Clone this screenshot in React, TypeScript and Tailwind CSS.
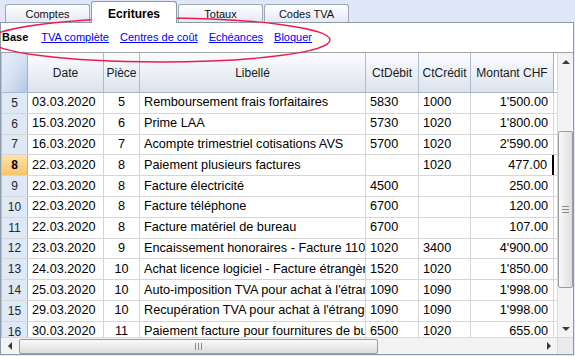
type Row = {
  n: number;
  date: string;
  doc: string;
  desc: string;
  deb: string;
  cre: string;
  amt: string;
};

const rows: Row[] = [
  { n: 5, date: "03.03.2020", doc: "5", desc: "Remboursement frais forfaitaires", deb: "5830", cre: "1000", amt: "1'500.00" },
  { n: 6, date: "15.03.2020", doc: "6", desc: "Prime LAA", deb: "5730", cre: "1020", amt: "1'800.00" },
  { n: 7, date: "16.03.2020", doc: "7", desc: "Acompte trimestriel cotisations AVS", deb: "5700", cre: "1020", amt: "2'590.00" },
  { n: 8, date: "22.03.2020", doc: "8", desc: "Paiement plusieurs factures", deb: "", cre: "1020", amt: "477.00" },
  { n: 9, date: "22.03.2020", doc: "8", desc: "Facture électricité", deb: "4500", cre: "", amt: "250.00" },
  { n: 10, date: "22.03.2020", doc: "8", desc: "Facture téléphone", deb: "6700", cre: "", amt: "120.00" },
  { n: 11, date: "22.03.2020", doc: "8", desc: "Facture matériel de bureau", deb: "6700", cre: "", amt: "107.00" },
  { n: 12, date: "23.03.2020", doc: "9", desc: "Encaissement honoraires - Facture 1100", deb: "1020", cre: "3400", amt: "4'900.00" },
  { n: 13, date: "24.03.2020", doc: "10", desc: "Achat licence logiciel - Facture étrangère", deb: "1520", cre: "1020", amt: "1'850.00" },
  { n: 14, date: "25.03.2020", doc: "10", desc: "Auto-imposition TVA pour achat à l'étranger", deb: "1090", cre: "1090", amt: "1'998.00" },
  { n: 15, date: "29.03.2020", doc: "10", desc: "Recupération TVA pour achat à l'étranger", deb: "1090", cre: "1090", amt: "1'998.00" },
  { n: 16, date: "30.03.2020", doc: "11", desc: "Paiement facture pour fournitures de bureau", deb: "6500", cre: "1020", amt: "655.00" },
];

// largeurs des colonnes : n°, Date, Pièce, Libellé, CtDébit, CtCrédit, Montant
const grid = "grid grid-cols-[26px_76px_36px_226px_53px_52px_83px]";

function Tab({ label, active }: { label: string; active?: boolean }) {
  if (active) {
    return (
      <div className="relative z-10 -mb-px flex h-[22px] w-[86px] justify-center rounded-t-[3px] border border-b-0 border-[#8e99a8] bg-white pt-[3px] text-[12px] font-bold">
        {label}
      </div>
    );
  }
  return (
    <div className="flex h-[18px] w-[85px] items-center justify-center rounded-t-[3px] border border-b-0 border-[#9ca7b5] bg-gradient-to-b from-white to-[#e3e9f3] pt-[2px] text-[11px] text-[#111]">
      {label}
    </div>
  );
}

function HeaderRow() {
  const cell =
    "flex items-center justify-center border-r border-[#aabdd0] bg-gradient-to-b from-[#fbfcfe] to-[#dde4ee] text-[12px] text-[#1b1b1b]";
  return (
    <div className={`${grid} h-[40px] shrink-0 border-b border-[#a9b9cb]`}>
      <div className="border-r border-[#9fb3cc] bg-gradient-to-br from-[#e7eefa] via-[#d6e2f4] to-[#b4c7e2]" />
      <div className={cell}>Date</div>
      <div className={cell}>Pièce</div>
      <div className={cell}>Libellé</div>
      <div className={cell}>CtDébit</div>
      <div className={cell}>CtCrédit</div>
      <div className={`${cell} border-r-[#f0a43a]`}>Montant CHF</div>
    </div>
  );
}

function DataRow({ r }: { r: Row }) {
  const current = r.n === 8;
  const cell = "flex items-center overflow-hidden whitespace-nowrap border-r border-[#d6d6d6]";
  return (
    <div className={`${grid} h-[20.8px] shrink-0 border-b border-[#d6d6d6] text-[12.7px]`}>
      <div
        className={
          current
            ? "flex items-center justify-center border-r border-[#9fb3cc] bg-gradient-to-b from-[#fde3a6] to-[#f8c46a] font-['Liberation_Sans_Narrow','Liberation_Sans',sans-serif] text-[12px] font-bold"
            : "flex items-center justify-center border-r border-[#9fb3cc] bg-[#dfe8f5] font-['Liberation_Sans_Narrow','Liberation_Sans',sans-serif] text-[12px] text-[#1c2633]"
        }
      >
        {r.n}
      </div>
      <div className={`${cell} pl-[4px]`}>{r.date}</div>
      <div className={`${cell} justify-center`}>{r.doc}</div>
      <div className={`${cell} pl-[4px]`}>{r.desc}</div>
      <div className={`${cell} pl-[4px]`}>{r.deb}</div>
      <div className={`${cell} pl-[4px]`}>{r.cre}</div>
      <div className={`${cell} justify-end pr-[5px] ${current ? "border-r-2 border-r-black" : ""}`}>{r.amt}</div>
    </div>
  );
}

function Arrow({ dir }: { dir: "up" | "down" | "left" | "right" }) {
  const pts = {
    up: "0,4 4,0 8,4",
    down: "0,0 8,0 4,4",
    left: "4,0 4,8 0,4",
    right: "0,0 4,4 0,8",
  }[dir];
  const vertical = dir === "up" || dir === "down";
  return (
    <svg width={vertical ? 8 : 4} height={vertical ? 4 : 8} viewBox={vertical ? "0 0 8 4" : "0 0 4 8"}>
      <polygon points={pts} fill="#3a3a3a" />
    </svg>
  );
}

function VScroll() {
  return (
    <div className="flex w-[16px] flex-col border-l border-[#d9d9d9] bg-[#f3f3f3]">
      <div className="flex h-[18px] items-center justify-center">
        <Arrow dir="up" />
      </div>
      <div className="h-[60px]" />
      <div className="flex h-[157px] flex-col items-center justify-center gap-[2px] rounded-[2px] border border-[#9c9c9c] bg-gradient-to-r from-[#fafafa] to-[#dedede]">
        <div className="h-px w-[7px] bg-[#8a8a8a]" />
        <div className="h-px w-[7px] bg-[#8a8a8a]" />
        <div className="h-px w-[7px] bg-[#8a8a8a]" />
      </div>
      <div className="flex-1" />
      <div className="flex h-[16px] items-center justify-center">
        <Arrow dir="down" />
      </div>
    </div>
  );
}

function HScroll() {
  return (
    <div className="flex h-[17px] shrink-0 border-t border-[#d9d9d9]">
      <div className="flex flex-1 items-center bg-[#f3f3f3]">
        <div className="flex w-[18px] justify-center">
          <Arrow dir="left" />
        </div>
        <div className="flex h-[15px] w-[359px] items-center justify-center gap-[2px] rounded-[2px] border border-[#9c9c9c] bg-gradient-to-b from-[#fafafa] to-[#dcdcdc]">
          <div className="h-[7px] w-px bg-[#8a8a8a]" />
          <div className="h-[7px] w-px bg-[#8a8a8a]" />
          <div className="h-[7px] w-px bg-[#8a8a8a]" />
        </div>
        <div className="flex-1" />
        <div className="flex w-[16px] justify-center">
          <Arrow dir="right" />
        </div>
      </div>
      <div className="w-[16px] border-l border-[#d9d9d9] bg-[#ebebeb]" />
    </div>
  );
}

export default function App() {
  return (
    <div className="relative h-[356px] w-[575px] overflow-hidden bg-[#dfe7f8] font-['Liberation_Sans',Arial,sans-serif] text-black">
      <div className="flex h-[22px] items-end gap-px pl-[5px]">
        <Tab label="Comptes" />
        <Tab label="Ecritures" active />
        <Tab label="Totaux" />
        <Tab label="Codes TVA" />
      </div>

      <div className="flex h-[333px] w-[574px] flex-col border border-[#8e9aa8] bg-white">
        {/* sous-vues du tableau Ecritures */}
        <div className="flex h-[29px] shrink-0 items-center gap-[11px] pl-[1px] text-[11px]">
          <span className="font-bold">Base</span>
          <span className="ml-[2px] text-[#0000ff] underline">TVA complète</span>
          <span className="text-[#0000ff] underline">Centres de coût</span>
          <span className="text-[#0000ff] underline">Echéances</span>
          <span className="text-[#0000ff] underline">Bloquer</span>
        </div>

        <div className="flex min-h-0 flex-1 flex-col border-t border-[#a3a3a3]">
          <div className="flex min-h-0 flex-1">
            <div className="flex min-w-0 flex-1 flex-col overflow-hidden border-l border-[#c5c5c5]">
              <HeaderRow />
              {rows.map((r) => (
                <DataRow key={r.n} r={r} />
              ))}
            </div>
            <VScroll />
          </div>
          <HScroll />
        </div>
      </div>

      {/* annotation : ellipse rouge autour des vues */}
      <svg className="pointer-events-none absolute left-0 top-0" width="575" height="80">
        <ellipse cx="160" cy="40" rx="170" ry="22" fill="none" stroke="#ec1c4c" strokeWidth="1.4" />
      </svg>
    </div>
  );
}
